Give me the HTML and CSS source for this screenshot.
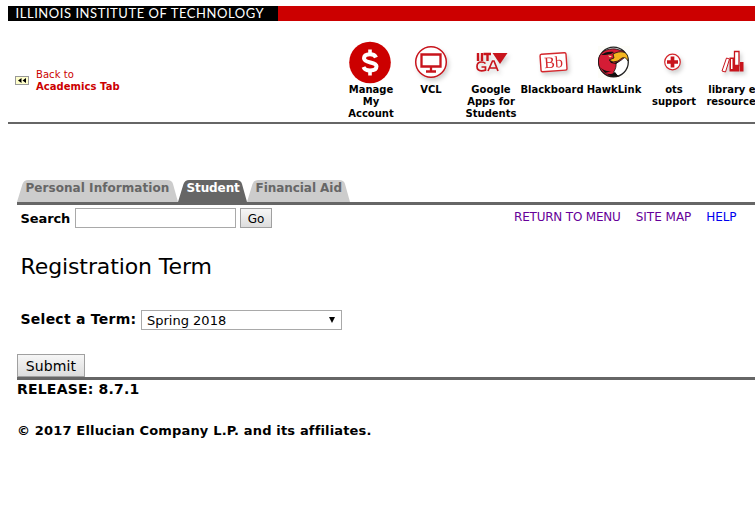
FILE: index.html
```html
<!DOCTYPE html>
<html lang="en">
<head>
<meta charset="utf-8">
<title>Registration Term</title>
<link rel="stylesheet" href="styles.css">
</head>
<body>
<header>
  <div class="banner"><div class="brand"><span>ILLINOIS INSTITUTE OF TECHNOLOGY</span></div></div>
  <div class="toolbar">
    <a class="back">
      <svg width="14" height="9" viewBox="0 0 14 9"><rect x=".5" y=".5" width="13" height="8" fill="#ffc" stroke="#999"/><path d="M6.500 2v5L3 4.500zM11 2v5L7.500 4.500z"/></svg>
      <span class="back-text">Back to<br><b>Academics Tab</b></span>
    </a>
    <nav class="apps">
      <a class="app">
        <svg class="icon" width="48" height="42" viewBox="0 0 48 42"><circle cx="23" cy="21.500" r="20.800" fill="#c00"/><path d="M29 16.500C28 14 25.500 13.300 23 13.300c-4 0-6 1.700-6 4 0 5.500 12.500 2.800 12.500 8 0 2.700-2.500 4.200-6.500 4.200-3 0-5.500-1-6.500-3.500" fill="none" stroke="#fff" stroke-width="4"/><path d="M23 8.500v5M23 29.500v5" stroke="#fff" stroke-width="3.600"/></svg>
        <span class="label">Manage<br>My<br>Account</span>
      </a>
      <a class="app">
        <svg class="icon shadow" width="48" height="42" viewBox="0 0 48 42"><circle cx="24" cy="21" r="15.300" fill="#fff" stroke="#c8141c" stroke-width="1.500"/><path d="M14.500 13.500h19v12h-19zM24 26v4M19 30.500h10" fill="none" stroke="#c8141c" stroke-width="2.300"/></svg>
        <span class="label">VCL</span>
      </a>
      <a class="app">
        <svg class="icon shadow" width="48" height="42" viewBox="0 0 48 42"><path d="M11 12v8M15 12v8M16.500 13h7.500M20.500 13v7" fill="none" stroke="#c8141c" stroke-width="2.400"/><path d="M25.500 12h15l-7.500 11z" fill="#c8141c"/><path d="M18.500 22.500c-1.200-1.200-2.500-1.500-4-1.500-3 0-4.500 2-4.500 4.500s1.700 4.300 4.500 4.300c2 0 4-.7 4-.7V26h-4M21 30l4.500-10h1.500L31 30M22.500 27h7" fill="none" stroke="#c8141c" stroke-width="1.700"/></svg>
        <span class="label">Google<br>Apps for<br>Students</span>
      </a>
      <a class="app wide">
        <svg class="icon shadow bb-icon" width="48" height="42" viewBox="0 0 48 42"><g transform="rotate(-4 24 21)"><rect x="11.500" y="12.500" width="26" height="17.500" rx="1.500" fill="#fff" stroke="#d5272d" stroke-width="1.400"/><text x="24.500" y="26.600" class="bb">Bb</text></g></svg>
        <span class="label">Blackboard</span>
      </a>
      <a class="app wide">
        <svg class="icon" width="48" height="42" viewBox="0 0 48 42"><rect x="8" y="5" width="32" height="32" fill="#fdfdf9"/><circle cx="23.500" cy="21" r="14.800" fill="#fff" stroke="#222" stroke-width="1.300"/><path d="M26 8C17 7 9 11 8.500 19c-.6 8 4 14.500 12 16.300h8l-5-4c2-3 3-6 2.500-9l5-3 5-4-2-5z" fill="#d51c35" stroke="#111" stroke-width=".8"/><path d="M23 13c4-2 7-2.500 10-2 4 1 5.500 4 5 9-1.500-3-3.500-4-6-3l-4 3-5 1-4-2 5-2z" fill="#f5b520" stroke="#111" stroke-width=".8"/><path d="M11 14c4-3 8-4 13-3l-3 2-6 1M10 26c4 4 8 5 12 4l-7 2M15 32c4 2 8 1 10-1l3 4-6 .8zM19 19l5 3 6-2-4 3-5-1z" fill="#111"/><path d="M18 14.500l4 .5-2 1.500z" fill="#f8e7a0"/></svg>
        <span class="label">HawkLink</span>
      </a>
      <a class="app support">
        <svg class="icon shadow" width="48" height="42" viewBox="0 0 48 42"><circle cx="22.500" cy="21" r="7.800" fill="#fff" stroke="#d5272d" stroke-width="1.200"/><path d="M17 21h11M22.500 15.500v11" stroke="#c8141c" stroke-width="3.700"/></svg>
        <span class="label">ots<br>support</span>
      </a>
      <a class="app last">
        <svg class="icon shadow" width="48" height="42" viewBox="0 0 48 42"><path d="M16.500 17l3 1-4 13-3.500-1z" fill="#fff" stroke="#c8141c"/><path d="M24.500 10.500h4.500v14h-4.500z" fill="#fff" stroke="#c8141c" stroke-width="1.300"/><path d="M19.500 16.500h4.500v14h-4.500zM24 24.500h5.500v6h-5.500zM30 21h3.500v9.500h-3.500z" fill="#c8141c"/><path d="M21 18h1.500v10H21z" fill="#fff"/></svg>
        <span class="label">library e-<br>resources</span>
      </a>
    </nav>
  </div>
</header>
<main>
  <nav class="tabs">
    <a class="tab personal"><svg viewBox="0 0 161 22" width="161" height="22"><path d="M0 22L5.500 4Q7 0 11 0h139q5 0 6 4l5 18z"/></svg><span>Personal Information</span></a>
    <a class="tab student"><svg viewBox="0 0 69 22" width="69" height="22"><path d="M0 22L5.500 4Q7 0 11 0h47q5 0 6 4l5 18z"/></svg><span>Student</span></a>
    <a class="tab financial"><svg viewBox="0 0 103 22" width="103" height="22"><path d="M0 22L5.500 4Q7 0 11 0h81q5 0 6 4l5 18z"/></svg><span>Financial Aid</span></a>
  </nav>
  <div class="search-row">
    <label for="q"><span>Search</span></label>
    <input id="q" type="text">
    <button class="go">Go</button>
    <div class="links"><a class="return">RETURN TO MENU</a><a class="map">SITE MAP</a><a class="help">HELP</a></div>
  </div>
  <h1><span>Registration Term</span></h1>
  <div class="term-row">
    <span class="term-label">Select a Term:</span>
    <div class="select"><span>Spring 2018</span><svg width="6" height="6" viewBox="0 0 6 6"><path d="M0 0h6L3 6z"/></svg></div>
  </div>
  <button class="submit">Submit</button>
  <footer><p class="release">RELEASE: 8.7.1</p><p class="copyright">© 2017 Ellucian Company L.P. and its affiliates.</p></footer>
</main>
</body>
</html>
```
FILE: styles.css
```css
* { box-sizing: border-box; }
body { margin: 0; padding: 6px 0 0 8px; height: 508px; overflow: hidden; background: #fff; color: #000; font-family: Verdana, "DejaVu Sans", sans-serif; white-space: nowrap; }
svg { display: block; flex: none; }
.banner { height: 15px; background: #c00; }
.brand { width: 270px; height: 15px; padding-left: 7.5px; background: #000; color: #fff; font: 13px/15px Lato, sans-serif; letter-spacing: .55px; }
.toolbar { display: flex; height: 103px; border-bottom: 2px solid #666; }
.back { display: flex; flex: none; width: 333px; padding: 48px 0 0 7px; color: #c00; font-size: 10px; line-height: 12px; }
.back svg { margin: 7px 7px 0 0; }
.back-text { height: 24px; letter-spacing: .05px; }
.apps { display: flex; flex: none; padding-top: 20px; }
.app { display: flex; flex: none; flex-direction: column; align-items: center; width: 60px; }
.wide { width: 62px; }
.support { width: 58px; }
.last { width: 62px; }
.icon { overflow: visible; }
.bb-icon { margin-left: 2px; }
.shadow { filter: drop-shadow(2px 3px 2px rgba(0, 0, 0, .18)); }
.label { margin-top: 1px; font-size: 10px; font-weight: bold; line-height: 12px; text-align: center; }
.bb { fill: #d5272d; font: 16px "Liberation Serif", serif; text-anchor: middle; }
main { padding: 56px 0 0 9px; }
.tabs { display: flex; height: 25px; border-bottom: 3px solid #666; }
.tab { display: grid; flex: none; color: #666; fill: #ccc; font-size: 12px; font-weight: bold; line-height: 17px; letter-spacing: .05px; }
.tab > * { grid-area: 1 / 1; }
.tab span { padding-left: 8.5px; }
.student { color: #fff; fill: #666; letter-spacing: -.1px; }
.financial { letter-spacing: -.05px; }
.search-row { display: flex; height: 23px; padding: 3px 0 0 3.5px; }
label { width: 54.5px; font-size: 13px; font-weight: bold; line-height: 22px; letter-spacing: -.1px; }
input { width: 161px; height: 20px; margin: 0 4px 0 0; padding: 0; border: 1px solid #a9a9a9; background: #fff; }
button { padding: 0; border: 1px solid #a0a0a0; background: linear-gradient(#f6f6f6, #ddd); color: #000; font-family: inherit; text-align: center; }
.go { width: 32px; height: 20px; padding-top: 1px; font-size: 12px; }
.links { display: flex; gap: 15px; margin-left: 242px; color: #609; font-size: 12px; line-height: 18px; }
.return { letter-spacing: -.2px; }
.help { color: #00e; letter-spacing: -.1px; }
h1 { height: 27px; margin: 25px 0 0 3.5px; font-size: 22px; font-weight: normal; line-height: 28px; letter-spacing: -.1px; }
.term-row { display: flex; height: 20px; margin: 30px 0 0 3.5px; }
.term-label { width: 120.5px; font-size: 14px; font-weight: bold; line-height: 18px; letter-spacing: .25px; }
.select { display: flex; justify-content: space-between; width: 201px; height: 20px; padding: 0 6px 0 5px; border: 1px solid #a9a9a9; font-size: 13px; line-height: 20px; }
.select svg { margin-top: 6px; }
.submit { display: block; width: 68px; height: 23px; margin-top: 24px; font-size: 14px; letter-spacing: .1px; }
footer { border-top: 3px solid #666; font-weight: bold; }
.release { margin: 0; padding-left: 0; font-size: 14px; line-height: 18px; letter-spacing: .2px; }
.copyright { margin: 24px 0 0; padding-left: 0; font-size: 13px; line-height: 18px; letter-spacing: .16px; }
```
